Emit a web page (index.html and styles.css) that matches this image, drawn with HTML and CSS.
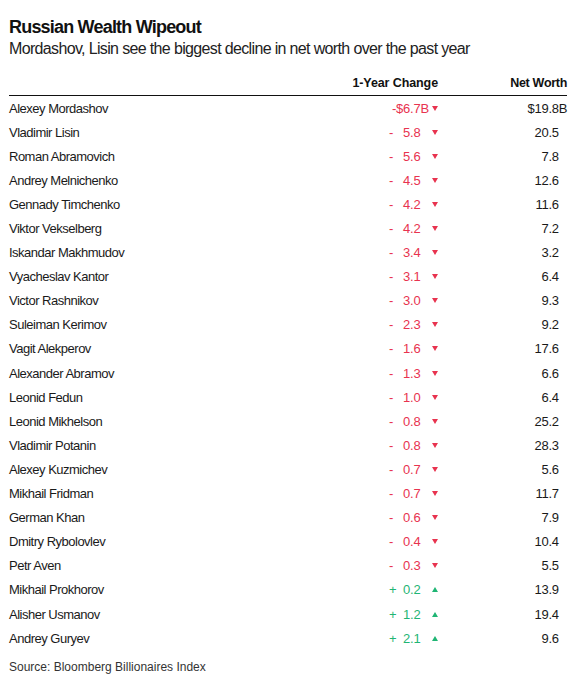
FILE: index.html
```html
<!DOCTYPE html>
<html>
<head>
<meta charset="utf-8">
<link rel="stylesheet" href="styles.css">
</head>
<body>
<div class="chart">
  <h1 class="title">Russian Wealth Wipeout</h1>
  <p class="subtitle">Mordashov, Lisin see the biggest decline in net worth over the past year</p>
  <div class="table">
    <div class="row head">
      <div class="name"></div>
      <div class="chg-h">1-Year Change</div>
      <div class="nw">Net Worth</div>
    </div>
    <div class="row">
      <div class="name">Alexey Mordashov</div>
      <div class="chg down"><span class="sign"></span><span class="val">-$6.7B</span><svg class="tri" viewBox="0 0 6 5"><path d="M0 0H6L3 5Z"/></svg></div>
      <div class="nw">$19.8B</div>
    </div>
    <div class="row"><div class="name">Vladimir Lisin</div><div class="chg down"><span class="sign">-</span><span class="val">5.8<i>B</i></span><svg class="tri" viewBox="0 0 6 5"><path d="M0 0H6L3 5Z"/></svg></div><div class="nw">20.5<i>B</i></div></div>
    <div class="row"><div class="name">Roman Abramovich</div><div class="chg down"><span class="sign">-</span><span class="val">5.6<i>B</i></span><svg class="tri" viewBox="0 0 6 5"><path d="M0 0H6L3 5Z"/></svg></div><div class="nw">7.8<i>B</i></div></div>
    <div class="row"><div class="name">Andrey Melnichenko</div><div class="chg down"><span class="sign">-</span><span class="val">4.5<i>B</i></span><svg class="tri" viewBox="0 0 6 5"><path d="M0 0H6L3 5Z"/></svg></div><div class="nw">12.6<i>B</i></div></div>
    <div class="row"><div class="name">Gennady Timchenko</div><div class="chg down"><span class="sign">-</span><span class="val">4.2<i>B</i></span><svg class="tri" viewBox="0 0 6 5"><path d="M0 0H6L3 5Z"/></svg></div><div class="nw">11.6<i>B</i></div></div>
    <div class="row"><div class="name">Viktor Vekselberg</div><div class="chg down"><span class="sign">-</span><span class="val">4.2<i>B</i></span><svg class="tri" viewBox="0 0 6 5"><path d="M0 0H6L3 5Z"/></svg></div><div class="nw">7.2<i>B</i></div></div>
    <div class="row"><div class="name">Iskandar Makhmudov</div><div class="chg down"><span class="sign">-</span><span class="val">3.4<i>B</i></span><svg class="tri" viewBox="0 0 6 5"><path d="M0 0H6L3 5Z"/></svg></div><div class="nw">3.2<i>B</i></div></div>
    <div class="row"><div class="name">Vyacheslav Kantor</div><div class="chg down"><span class="sign">-</span><span class="val">3.1<i>B</i></span><svg class="tri" viewBox="0 0 6 5"><path d="M0 0H6L3 5Z"/></svg></div><div class="nw">6.4<i>B</i></div></div>
    <div class="row"><div class="name">Victor Rashnikov</div><div class="chg down"><span class="sign">-</span><span class="val">3.0<i>B</i></span><svg class="tri" viewBox="0 0 6 5"><path d="M0 0H6L3 5Z"/></svg></div><div class="nw">9.3<i>B</i></div></div>
    <div class="row"><div class="name">Suleiman Kerimov</div><div class="chg down"><span class="sign">-</span><span class="val">2.3<i>B</i></span><svg class="tri" viewBox="0 0 6 5"><path d="M0 0H6L3 5Z"/></svg></div><div class="nw">9.2<i>B</i></div></div>
    <div class="row"><div class="name">Vagit Alekperov</div><div class="chg down"><span class="sign">-</span><span class="val">1.6<i>B</i></span><svg class="tri" viewBox="0 0 6 5"><path d="M0 0H6L3 5Z"/></svg></div><div class="nw">17.6<i>B</i></div></div>
    <div class="row"><div class="name">Alexander Abramov</div><div class="chg down"><span class="sign">-</span><span class="val">1.3<i>B</i></span><svg class="tri" viewBox="0 0 6 5"><path d="M0 0H6L3 5Z"/></svg></div><div class="nw">6.6<i>B</i></div></div>
    <div class="row"><div class="name">Leonid Fedun</div><div class="chg down"><span class="sign">-</span><span class="val">1.0<i>B</i></span><svg class="tri" viewBox="0 0 6 5"><path d="M0 0H6L3 5Z"/></svg></div><div class="nw">6.4<i>B</i></div></div>
    <div class="row"><div class="name">Leonid Mikhelson</div><div class="chg down"><span class="sign">-</span><span class="val">0.8<i>B</i></span><svg class="tri" viewBox="0 0 6 5"><path d="M0 0H6L3 5Z"/></svg></div><div class="nw">25.2<i>B</i></div></div>
    <div class="row"><div class="name">Vladimir Potanin</div><div class="chg down"><span class="sign">-</span><span class="val">0.8<i>B</i></span><svg class="tri" viewBox="0 0 6 5"><path d="M0 0H6L3 5Z"/></svg></div><div class="nw">28.3<i>B</i></div></div>
    <div class="row"><div class="name">Alexey Kuzmichev</div><div class="chg down"><span class="sign">-</span><span class="val">0.7<i>B</i></span><svg class="tri" viewBox="0 0 6 5"><path d="M0 0H6L3 5Z"/></svg></div><div class="nw">5.6<i>B</i></div></div>
    <div class="row"><div class="name">Mikhail Fridman</div><div class="chg down"><span class="sign">-</span><span class="val">0.7<i>B</i></span><svg class="tri" viewBox="0 0 6 5"><path d="M0 0H6L3 5Z"/></svg></div><div class="nw">11.7<i>B</i></div></div>
    <div class="row"><div class="name">German Khan</div><div class="chg down"><span class="sign">-</span><span class="val">0.6<i>B</i></span><svg class="tri" viewBox="0 0 6 5"><path d="M0 0H6L3 5Z"/></svg></div><div class="nw">7.9<i>B</i></div></div>
    <div class="row"><div class="name">Dmitry Rybolovlev</div><div class="chg down"><span class="sign">-</span><span class="val">0.4<i>B</i></span><svg class="tri" viewBox="0 0 6 5"><path d="M0 0H6L3 5Z"/></svg></div><div class="nw">10.4<i>B</i></div></div>
    <div class="row"><div class="name">Petr Aven</div><div class="chg down"><span class="sign">-</span><span class="val">0.3<i>B</i></span><svg class="tri" viewBox="0 0 6 5"><path d="M0 0H6L3 5Z"/></svg></div><div class="nw">5.5<i>B</i></div></div>
    <div class="row"><div class="name">Mikhail Prokhorov</div><div class="chg up"><span class="sign">+</span><span class="val">0.2<i>B</i></span><svg class="tri" viewBox="0 0 6 5"><path d="M0 5H6L3 0Z"/></svg></div><div class="nw">13.9<i>B</i></div></div>
    <div class="row"><div class="name">Alisher Usmanov</div><div class="chg up"><span class="sign">+</span><span class="val">1.2<i>B</i></span><svg class="tri" viewBox="0 0 6 5"><path d="M0 5H6L3 0Z"/></svg></div><div class="nw">19.4<i>B</i></div></div>
    <div class="row"><div class="name">Andrey Guryev</div><div class="chg up"><span class="sign">+</span><span class="val">2.1<i>B</i></span><svg class="tri" viewBox="0 0 6 5"><path d="M0 5H6L3 0Z"/></svg></div><div class="nw">9.6<i>B</i></div></div>
  </div>
  <p class="source">Source: Bloomberg Billionaires Index</p>
</div>
</body>
</html>
```

FILE: styles.css
```css
* { box-sizing: border-box; }
body { margin: 0; background: #fff; font-family: "Liberation Sans", Arial, sans-serif; color: #1a1a1a; }
.chart { padding: 16px 7px 0 9px; }
.title { margin: 0; font-size: 18px; line-height: 22px; font-weight: 700; letter-spacing: -0.8px; color: #111; }
.subtitle { margin: 1px 0 0; font-size: 16px; line-height: 20px; letter-spacing: -0.65px; color: #222; }
.table { margin-top: 12px; }
.row { display: grid; grid-template-columns: 1fr 55px 127px; height: 24.1px; align-items: center; font-size: 13px; letter-spacing: -0.5px; }
.head { font-weight: 700; font-size: 12.5px; letter-spacing: -0.1px; border-bottom: 1.5px solid #111; height: 25px; color: #111; }
.chg-h { white-space: nowrap; justify-self: end; margin-right: 2px; }
.nw { text-align: right; white-space: nowrap; letter-spacing: -0.3px; }
.chg { display: flex; justify-content: space-between; align-items: center; white-space: nowrap; letter-spacing: -0.2px; }
.sign { padding-left: 4px; }
.val { margin-left: auto; }
i { visibility: hidden; font-style: normal; }
.down { color: #e8334f; fill: #e8334f; }
.up { color: #1fb574; fill: #1fb574; }
.tri { width: 6px; height: 5px; margin-left: 3px; margin-right: 2px; flex: none; }
.source { margin: 9px 0 0; font-size: 12px; line-height: 16px; color: #333; }
```
